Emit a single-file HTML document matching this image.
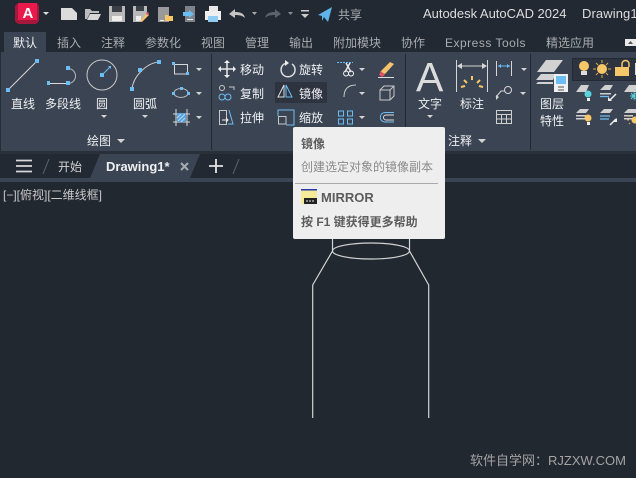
<!DOCTYPE html>
<html><head><meta charset="utf-8">
<style>
html,body{margin:0;padding:0;background:#212830;width:636px;height:478px;overflow:hidden}
svg{display:block}
text{font-family:"Liberation Sans","Noto Sans CJK SC",sans-serif;font-size:12px}
.t{fill:#a9acb0}.w{fill:#eef0f2}
</style></head><body>
<svg width="636" height="478" viewBox="0 0 636 478" xmlns="http://www.w3.org/2000/svg">
<rect width="636" height="478" fill="#212830"/>
<rect width="636" height="52" fill="#222933"/>
<!-- logo -->
<path d="M15 6l3-3h19l2 3v15l-3 3H18l-3-3z" fill="#a5173c"/><rect x="18" y="3" width="19" height="17" fill="#e8194b"/>
<text x="22.500" y="18" style="font-size:15px;font-weight:bold" fill="#fff">A</text>
<path d="M43 12h6l-3 3z" fill="#ddd"/>
<!-- qat -->
<path d="M61 8h11l5 5v7H61z" fill="#dcdcdc"/>
<path d="M85 19V9h5l2 2h7v2h-9l-3 6z" fill="#bdbdbd"/><path d="M87 20l3-6h11l-3 6z" fill="#d6d6d6"/>
<path d="M109 6h16v16h-16z" fill="#b9b9b9"/><rect x="112" y="6" width="10" height="6" fill="#3a3f47"/><rect x="112" y="16" width="10" height="5" fill="#eee"/>
<path d="M133 6h14v9l-6 7h-8z" fill="#b9b9b9"/><rect x="136" y="6" width="8" height="5" fill="#3a3f47"/><rect x="136" y="16" width="5" height="5" fill="#eee"/>
<path d="M140 21l7-8 2 2-7 7z" fill="#f3c26b"/><path d="M146 14l1-2 2 1-1 2z" fill="#e0526a"/>
<rect x="158" y="7" width="11" height="15" fill="#9a9a9a"/><rect x="160" y="20" width="4" height="1" fill="#eee"/><path d="M165 15h3l1 1h4v5h-8z" fill="#f6c768"/>
<rect x="185" y="6" width="10" height="16" fill="#7e828a"/><rect x="187" y="19" width="6" height="1" fill="#eee"/>
<path d="M183 12h6v-2l5 4-5 4v-2h-6z" fill="#6cbdf2"/>
<path d="M209 6h9v5h-9z" fill="#e8e8e8"/><path d="M205 11h16v9h-3v-3h-10v3h-3z" fill="#efefef"/><rect x="208" y="16" width="10" height="6" fill="#8fcdf5"/>
<path d="M229 14l6-5v3c5 0 9 1 10 6-2-2-5-3-10-3v3z" fill="#c4c4c4"/>
<path d="M252 12h5l-2.500 3z" fill="#aaa"/>
<path d="M281 14l-6-5v3c-5 0-9 1-10 6 2-2 5-3 10-3v3z" fill="#5c626b"/>
<path d="M288 12h5l-2.500 3z" fill="#8a8d92"/>
<rect x="301" y="10" width="8" height="1.500" fill="#ccc"/><path d="M301 14h8l-4 4z" fill="#ccc"/>
<path d="M318 15l14-8-4 15-4-5-2 4v-5z" fill="#5fb4ea"/>
<text x="338" y="19" class="t">共享</text>
<text x="423" y="18" style="font-size:13px;letter-spacing:-.02px" fill="#dcdcdc">Autodesk AutoCAD 2024</text>
<text x="582" y="18" style="font-size:13px;letter-spacing:.1px" fill="#dcdcdc">Drawing1</text>
<!-- tabs -->
<rect x="4" y="32" width="42" height="20" fill="#3b4453"/>
<text x="13" y="47" class="w">默认</text><text x="57" y="47" class="t">插入</text><text x="101" y="47" class="t">注释</text><text x="145" y="47" class="t">参数化</text><text x="201" y="47" class="t">视图</text><text x="245" y="47" class="t">管理</text><text x="289" y="47" class="t">输出</text><text x="333" y="47" class="t">附加模块</text><text x="401" y="47" class="t">协作</text><text x="445" y="47" class="t" style="letter-spacing:.5px">Express Tools</text><text x="546" y="47" class="t">精选应用</text>
<rect x="625" y="39" width="11" height="7" fill="#e9e9e9"/><path d="M628 44h5l-2.500-3z" fill="#555"/>
<!-- ribbon -->
<rect y="52" width="636" height="99" fill="#3b4453"/>
<rect y="52" width="1" height="99" fill="#262c36"/>
<rect x="211" y="54" width="1" height="96" fill="#222933"/><rect x="405" y="54" width="1" height="96" fill="#222933"/><rect x="530" y="54" width="1" height="96" fill="#222933"/>
<!-- draw panel -->
<g fill="none" stroke="#d8d8d8" stroke-width="1">
<path d="M8 90L37 61"/><path d="M49 83.500h19"/><path d="M68 68.500a7.500 7.500 0 0 1 0 15" stroke="#bbb"/>
<circle cx="102" cy="75" r="15" stroke="#c8c8c8"/>
<path d="M132 89c1-12 14-26 27-27" stroke="#c8c8c8"/>
<rect x="174.500" y="64.500" width="13" height="9.500"/>
<ellipse cx="181" cy="93" rx="7" ry="4.500" stroke="#bbb"/>
<path d="M173 114h17M173 122h17M176 109v17M187 109v17"/>
</g>
<path d="M102 75l8-8" stroke="#6cbdf2"/><path d="M108 66l3 0 0 3z" fill="#6cbdf2"/>
<path d="M177 113h9v9h-9z" fill="#5a9fd8"/><path d="M178 121l7-7M177 118l4-4M181 122l4-4" stroke="#b0d8f5" stroke-width="1"/>
<g fill="#6cbdf2"><rect x="6" y="88" width="4" height="4"/><rect x="35" y="59" width="4" height="4"/><rect x="47" y="81" width="3" height="4"/><rect x="66" y="81" width="4" height="4"/><rect x="66" y="66" width="4" height="4"/><rect x="100" y="73" width="4" height="4"/><rect x="130" y="87" width="4" height="4"/><rect x="138" y="68" width="4" height="4"/><rect x="157" y="60" width="4" height="4"/><rect x="172" y="62" width="3" height="3"/><rect x="186" y="72" width="3" height="3"/><rect x="172" y="92" width="3" height="3"/><rect x="187" y="92" width="3" height="3"/><rect x="180" y="87" width="3" height="3"/></g>
<g class="w"><text x="11" y="108" class="w">直线</text><text x="45" y="108" class="w">多段线</text><text x="96" y="108" class="w">圆</text><text x="133" y="108" class="w">圆弧</text><text x="87" y="145" class="w">绘图</text></g>
<g fill="#d4d4d4"><path d="M101 115h6l-3 3z"/><path d="M142 115h6l-3 3z"/><path d="M196 68h6l-3 3z"/><path d="M196 92h6l-3 3z"/><path d="M196 116h6l-3 3z"/><path d="M117 139h8l-4 4z"/></g>
<!-- modify panel -->
<rect x="275" y="82" width="52" height="21" fill="#2d3440"/>
<g fill="none" stroke="#e8e8e8" stroke-width="1.500">
<path d="M220 69h14M227 62v14"/>
<path d="M292 64a7 7 0 1 1-7-.500" stroke="#ddd"/>
<path d="M278 97l6-12v12z" stroke="#ddd" stroke-width="1"/>
</g>
<path d="M227 60l3 3h-6zM227 78l3-3h-6zM218 69l3-3v6zM236 69l-3-3v6z" fill="#eee"/>
<path d="M285 60l4 3-4 3z" fill="#eee"/>
<path d="M286 85l6 12h-6z" fill="none" stroke="#6cbdf2"/>
<g fill="none" stroke="#c8c8c8" stroke-width="1">
<circle cx="222" cy="88" r="2.500"/><path d="M229 87h5v3"/>
<rect x="219.500" y="110.500" width="7" height="14"/>
<rect x="278.500" y="116.500" width="7.500" height="7.500"/>
<path d="M344 97c0-7 3-12 12-12" />
<path d="M346 71a2.500 2.500 0 1 0 .1 0zM351 71a2.500 2.500 0 1 0 .1 0z" stroke="#eee"/>
<path d="M345 72l5-9M351 72l-5-9" stroke="#eee" stroke-width="1.400"/>
<rect x="380" y="90" width="10" height="10" />
<path d="M380 90l4-4h10v10l-4 4M390 90l4-4"/>
</g>
<g fill="none" stroke="#6cbdf2" stroke-width="1">
<circle cx="222" cy="97" r="3"/><circle cx="228" cy="97" r="3"/>
<path d="M229 110l4 14h-5"/>
<path d="M278 116v-6h16v15h-8"/>
<rect x="338.500" y="111" width="5" height="5"/><rect x="347.500" y="111" width="5" height="5"/><rect x="338.500" y="119" width="5" height="5"/><rect x="347.500" y="119" width="5" height="5"/>
<path d="M337 62.500h16" stroke-dasharray="2 1"/>
<path d="M394 112.500h-9a4.500 4.500 0 0 0 0 9.500h9"/>
</g>
<path d="M394 115h-8a2 2 0 0 0 0 5h8" fill="none" stroke="#ddd"/>
<path d="M222 120h6m-2-2l2 2-2 2" stroke="#eee" fill="none"/>
<path d="M380 72l10-10 4 2-9 10z" fill="#f3c26b"/><path d="M381 71l4 4-3 2-3-2z" fill="#e0526a"/><rect x="378" y="77" width="16" height="1" fill="#ddd"/>
<g fill="#d4d4d4"><path d="M359 68h6l-3 3z"/><path d="M359 92h6l-3 3z"/><path d="M359 116h6l-3 3z"/></g>
<g class="w"><text x="240" y="74" class="w">移动</text><text x="299" y="74" class="w">旋转</text><text x="240" y="98" class="w">复制</text><text x="299" y="98" class="w">镜像</text><text x="240" y="122" class="w">拉伸</text><text x="299" y="122" class="w">缩放</text></g>
<!-- annotation -->
<text x="416" y="91" style="font-size:41px" fill="#dcdcdc">A</text>
<text x="418" y="108" class="w">文字</text><path d="M427 115h6l-3 3z" fill="#d4d4d4"/>
<text x="460" y="108" class="w">标注</text>
<text x="448" y="145" class="w">注释</text><path d="M478 139h8l-4 4z" fill="#d4d4d4"/>
<g fill="none" stroke="#d6d6d6" stroke-width="1"><path d="M456.500 60v32M487.500 60v32M458 66h28"/></g>
<path d="M457 66l5-3v6zM487 66l-5-3v6z" fill="#d6d6d6"/>
<g stroke="#f4c76a" stroke-width="2"><path d="M472 76v4M464 80l3 3M480 80l-3 3M461 87l4-1M483 87l-4-1"/></g>
<path d="M496.500 61v15M511.500 61v15" stroke="#d6d6d6"/><path d="M498 66h12" stroke="#6cbdf2"/><path d="M498 66l3-2v4zM510 66l-3-2v4z" fill="#6cbdf2"/>
<circle cx="508" cy="90" r="3.500" fill="none" stroke="#d6d6d6"/><path d="M505 91h-4l-5 6" stroke="#d6d6d6" fill="none"/><path d="M496 100l0-5 3 2z" fill="#d6d6d6"/>
<g fill="none" stroke="#d0d0d0"><rect x="496.500" y="110.500" width="15" height="13"/><path d="M496 114.500h16M496 119h16M501.500 114v9M506.500 114v9"/></g>
<path d="M521 68h6l-3 3z" fill="#d4d4d4"/><path d="M520 92h6l-3 3z" fill="#d4d4d4"/>
<!-- layers -->
<g fill="#d2d2d2"><path d="M537 72l9-12h17l-9 12z"/><path d="M536 80l5-6h15l-3 6z"/><path d="M536 84h17v-2l-2 0-13 0z"/></g>
<rect x="554" y="74" width="14" height="18" fill="#f0f0f0"/><rect x="556" y="76" width="10" height="8" fill="#6cbdf2"/><path d="M558 87h6M558 90h6" stroke="#555"/>
<text x="540" y="108" class="w">图层</text><text x="540" y="125" class="w">特性</text>
<rect x="572.500" y="58.500" width="64" height="22" fill="#2d3440" stroke="#222933"/>
<circle cx="584" cy="66" r="5" fill="#f6c768"/><rect x="581" y="71" width="6" height="4" fill="#ddd"/>
<circle cx="602" cy="69" r="5" fill="#f6c768"/><path d="M602 60v3M602 75v3M593 69h3M608 69h3M596 63l2 2M606 73l2 2M608 63l-2 2M598 73l-2 2" stroke="#e0a850"/>
<path d="M615 67h14v9h-14z" fill="#f6c768"/><path d="M622 67v-3a3.500 3.500 0 0 1 7 0v3" fill="none" stroke="#f6c768" stroke-width="1.500"/>
<rect x="635" y="63" width="1" height="12" fill="#ddd"/>
<!-- layer rows -->
<g fill="#d0d0d0">
<path d="M576 92l5-7h8l-3 7z"/><path d="M600 90l5-5h8l-3 5z"/><path d="M600 93h11v1.500h-11z"/><path d="M624 92l5-7h7v7z"/>
<path d="M576 113l4-4h9l-3 4z"/><path d="M576 115h10v1.500h-10z"/><path d="M576 118h10v1.500h-10z"/>
<path d="M600 113l4-4h9l-3 4z"/><path d="M624 113l4-4h8v4z"/><path d="M624 115h9v1.500h-9z"/><path d="M624 118h9v1.500h-9z"/>
</g>
<path d="M600 96.500h9M600 116h10M600 119h9" stroke="#6cbdf2" stroke-width="1.200"/>
<circle cx="588" cy="94" r="3.500" fill="#5cd2dc"/><rect x="587" y="98" width="3" height="3" fill="#eee"/>
<path d="M616 94l-6 6" stroke="#eee" stroke-width="1.500"/><path d="M608 97v4h4z" fill="#eee"/>
<path d="M610 125l6-6" stroke="#eee" stroke-width="1.500"/><path d="M617 118v4h-4zz" fill="#eee"/>
<circle cx="588" cy="118" r="3.500" fill="#f6c768"/><rect x="587" y="122" width="3" height="3" fill="#eee"/>
<circle cx="635" cy="120" r="3.500" fill="#f6c768"/><path d="M628 115l1 2M627 120h2M629 124l1-1" stroke="#e0a850"/>
<path d="M634 92v8M630 96h6M631 93l5 6M636 93l-5 6" stroke="#5cd2dc"/>
<!-- tab bar -->
<rect y="151" width="636" height="3" fill="#2a303a"/>
<rect y="154" width="636" height="24" fill="#222933"/>
<rect y="178" width="636" height="4" fill="#3b4453"/>
<path d="M90 178l10-24h100l-10 24z" fill="#3b4453"/>
<path d="M16 160.500h16M16 166h16M16 171.500h16" stroke="#d8d8d8" stroke-width="1.800"/>
<path d="M43 174l6-15M233 174l6-15" stroke="#5c6470"/>
<text x="58" y="171" class="w" style="fill:#d2d2d2">开始</text>
<text x="106" y="171" style="font-size:13px;font-weight:bold" fill="#eef0f2">Drawing1*</text>
<path d="M181 163l7 7M188 163l-7 7" stroke="#a6abb2" stroke-width="2"/>
<path d="M209 166h14M216 159v14" stroke="#e4e4e4" stroke-width="1.800"/>
<!-- canvas text -->
<text x="3" y="199" fill="#c8c8c8">[−][俯视][二维线框]</text>
<!-- drawing -->
<g fill="none" stroke="#d4d4d4" stroke-width="1.200">
<ellipse cx="371" cy="251" rx="38.500" ry="8"/>
<path d="M332.500 238v13L312.700 285v133M409.500 238v13L428.700 285v133"/>
</g>
<!-- tooltip -->
<rect x="293" y="127" width="152" height="112" rx="2" fill="#eeeeee"/>
<text x="301" y="148" fill="#5c5c5c" style="font-weight:bold">镜像</text>
<text x="301" y="171" fill="#8a8a8a">创建选定对象的镜像副本</text>
<rect x="295" y="183" width="143" height="1" fill="#aaa"/>
<rect x="301" y="189" width="16" height="15" fill="#f5ec9a"/><rect x="301" y="189" width="16" height="1.500" fill="#2438a8"/><rect x="304" y="198" width="13" height="6" fill="#222"/><path d="M306 201h9" stroke="#eee" stroke-dasharray="2 1"/>
<text x="321" y="202" style="font-size:13px;font-weight:bold" fill="#5c5c5c">MIRROR</text>
<text x="301" y="226" fill="#5c5c5c" style="font-weight:bold">按 F1 键获得更多帮助</text>
<text x="470" y="465" style="font-size:13px" fill="#a4a4a4">软件自学网：RJZXW.COM</text>
</svg>
</body></html>
